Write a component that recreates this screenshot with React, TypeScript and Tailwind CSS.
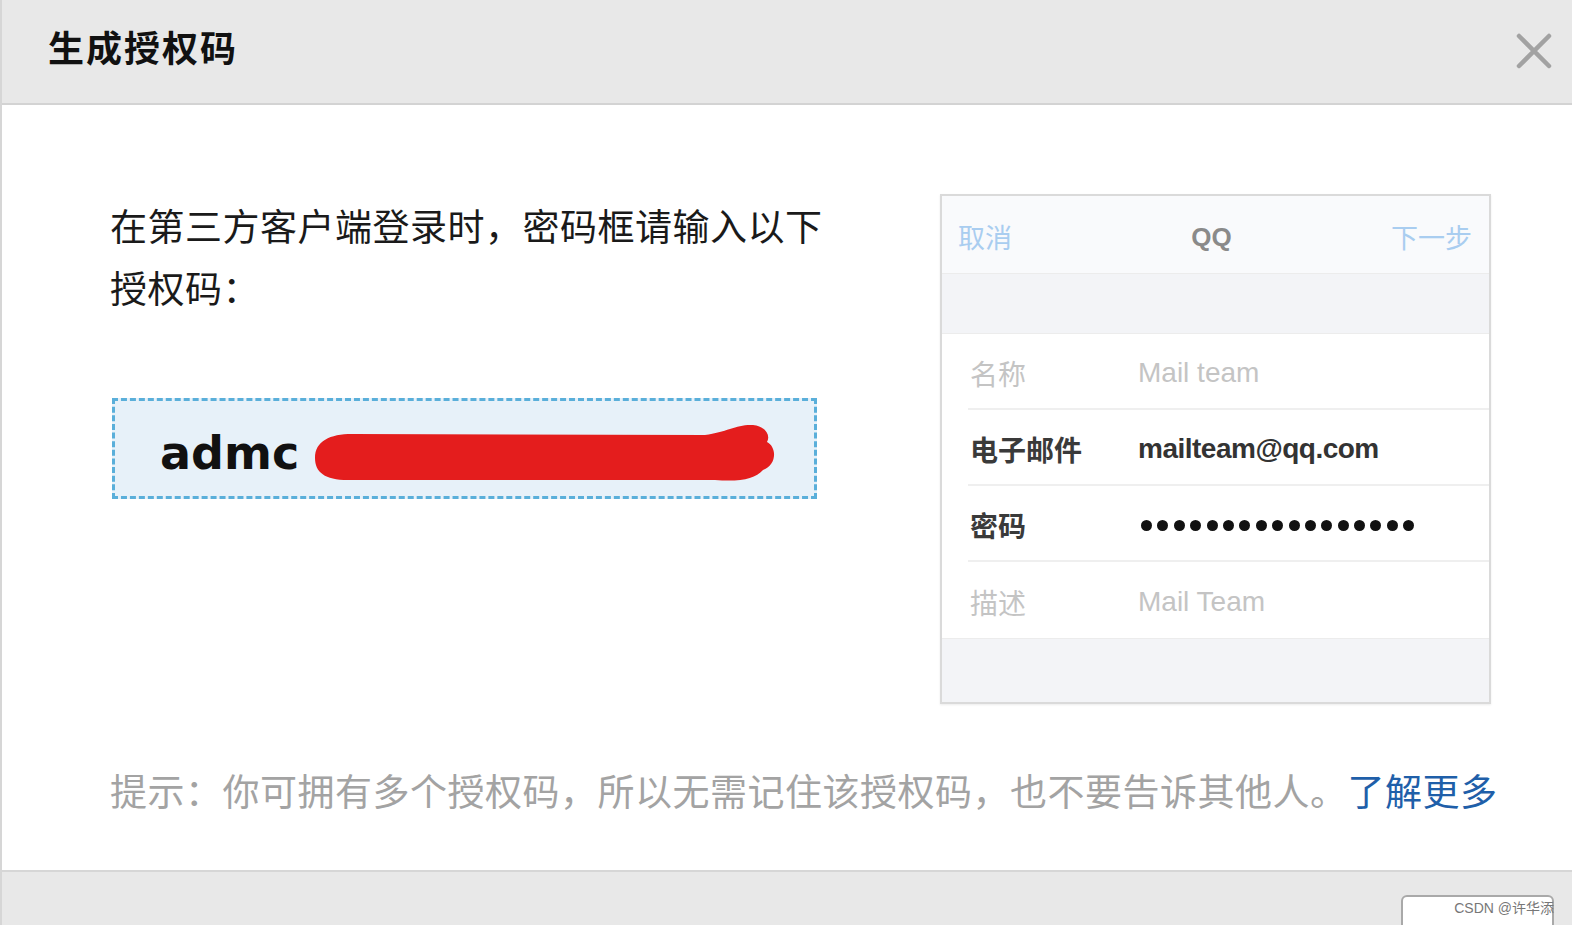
import React from 'react';

const cjk = { fontFamily: '"Noto Sans CJK SC", "Noto Sans", sans-serif' };

const rows = [
  { label: '名称', value: 'Mail team', strong: false },
  { label: '电子邮件', value: 'mailteam@qq.com', strong: true },
  { label: '密码', value: '', strong: true },
  { label: '描述', value: 'Mail Team', strong: false },
];

function PhoneCard() {
  return (
    <div className="w-[551px] h-[510px] border-2 border-[#dadada] bg-white flex flex-col shadow-[0_1px_2px_rgba(0,0,0,0.08)]">
      <div className="h-[77px] bg-[#f9fafc] flex items-center justify-between pl-[16px] pr-[17px] pt-[6px] text-[27px]" style={cjk}>
        <span className="text-[#a9cdf0]">取消</span>
        <span className="text-[#8a8a8a] font-bold text-[26px] pl-[20px]" style={{ fontFamily: '"Liberation Sans", Arial, sans-serif' }}>QQ</span>
        <span className="text-[#a9cdf0]">下一步</span>
      </div>
      <div className="h-[61px] bg-[#f3f4f7] border-y border-[#ececec]" />
      <div className="flex flex-col pl-[26px]">
        {rows.map((r) => (
          <div key={r.label} className="h-[76px] flex items-center pt-[4px] border-b-2 border-[#efefef] last:border-b-0">
            <span
              className={`w-[170px] pl-[2px] text-[28px] ${r.strong ? 'text-[#3a3a3a] font-bold' : 'text-[#c4c4c4]'}`}
              style={cjk}
            >
              {r.label}
            </span>
            {r.label === '密码' ? (
              <div className="flex gap-[5.4px] pl-[3px]">
                {Array.from({ length: 17 }).map((_, i) => (
                  <span key={i} className="w-[11px] h-[11px] rounded-full bg-[#111]" />
                ))}
              </div>
            ) : (
              <span
                className={`text-[28px] ${r.strong ? 'text-[#333] font-bold tracking-[-0.5px]' : 'text-[#c4c4c4]'}`}
                style={{ fontFamily: '"Liberation Sans", Arial, sans-serif' }}
              >
                {r.value}
              </span>
            )}
          </div>
        ))}
      </div>
      <div className="flex-1 bg-[#f3f4f7] border-t border-[#ececec]" />
    </div>
  );
}

function CodeBox() {
  return (
    <div className="relative w-[705px] h-[101px] bg-[#e7f1f9] border-[3px] border-dashed border-[#5aafda] flex items-center pl-[45px]">
      <span
        className="text-[46px] font-bold text-[#111] leading-none pt-[8px]"
        style={{ fontFamily: '"DejaVu Sans", Verdana, sans-serif' }}
      >
        admc
      </span>
      {/* 打码的涂抹 */}
      <svg className="absolute left-0 top-0" width="705" height="100" viewBox="0 0 705 100">
        <path
          d="M200,57 C200,40 215,33 237,33 L590,34 C612,31 622,23 638,24 C650,25 656,34 652,41 C662,46 662,64 648,69 C640,78 625,81 600,79 L237,79 C211,80 200,72 200,57 Z"
          fill="#e41d1d"
        />
      </svg>
    </div>
  );
}

export default function App() {
  return (
    <div className="w-[1572px] h-[925px] overflow-hidden flex flex-col bg-white border-l-2 border-[#d6d6d6]">
      <div className="h-[105px] shrink-0 bg-[#e8e8e8] border-b-2 border-[#d3d3d3] flex items-center justify-between pl-[46px] pr-[20px]">
        <span className="text-[36px] font-bold text-[#111] tracking-[2px] pb-[12px]" style={cjk}>
          生成授权码
        </span>
        <svg width="36" height="36" viewBox="0 0 36 36" className="mb-[2px]">
          <path d="M3 3 L33 33 M33 3 L3 33" stroke="#a2a2a2" strokeWidth="4.5" strokeLinecap="round" />
        </svg>
      </div>

      <div className="flex-1 flex flex-col pt-[89px]">
        <div className="flex pl-[108px]">
          <div className="w-[830px] flex flex-col">
            <p className="text-[37px] leading-[62px] text-[#1a1a1a] tracking-[0.5px] w-[730px]" style={cjk}>
              在第三方客户端登录时，密码框请输入以下授权码：
            </p>
            <div className="mt-[80px] pl-[2px]">
              <CodeBox />
            </div>
          </div>
          <PhoneCard />
        </div>
        <p className="mt-[61px] pl-[108px] text-[37px] leading-[50px] text-[#a3a3a3] tracking-[0.5px] whitespace-nowrap" style={cjk}>
          提示：你可拥有多个授权码，所以无需记住该授权码，也不要告诉其他人。
          <span className="text-[#1f5fa9]">了解更多</span>
        </p>
      </div>

      <div className="h-[55px] shrink-0 bg-[#e8e8e8] border-t-2 border-[#d6d6d6] flex justify-end pr-[18px] relative">
        <div className="mt-[23px] w-[153px] h-[40px] bg-white border-2 border-[#a9a9a9] rounded-[6px]" />
        <span
          className="absolute right-[18px] top-[26px] text-[14px] text-[#777]"
          style={{ fontFamily: '"Liberation Sans", "Noto Sans CJK SC", sans-serif' }}
        >
          CSDN @许华添
        </span>
      </div>
    </div>
  );
}
